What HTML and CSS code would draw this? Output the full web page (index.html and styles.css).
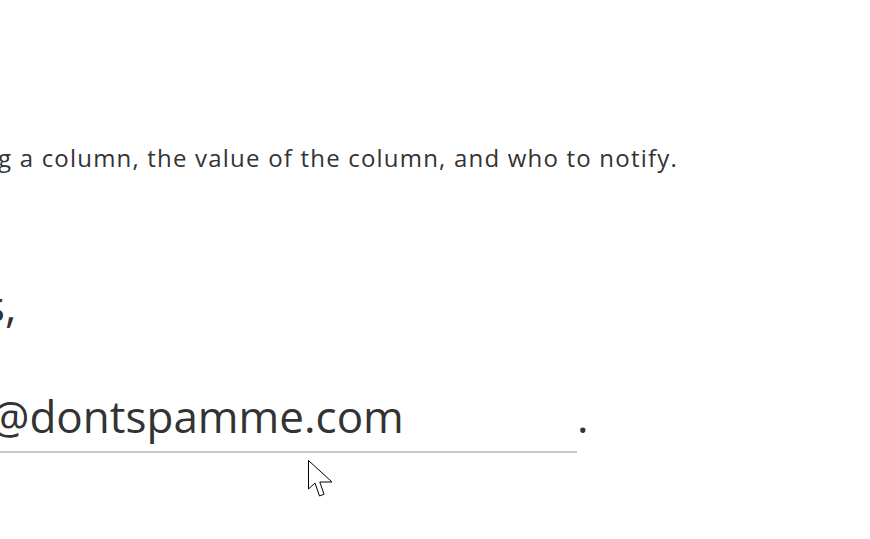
FILE: index.html
```html
<!DOCTYPE html>
<html lang="en">
<head>
<meta charset="utf-8">
<link rel="stylesheet" href="styles.css">
</head>
<body>
<div class="page">
  <p class="desc">g a column, the value of the column, and who to notify.</p>
  <div class="big line-s">s,</div>
  <div class="big line-mail">
    <span class="field">@dontspamme.com</span><span class="dot">.</span>
  </div>
</div>
<svg class="cursor" width="28" height="42" viewBox="0 0 28 42">
  <path d="M0.5 0.5 L0.5 29 L7 23 L11.5 36 L16 34.2 L11.8 22 L24 22 Z" fill="#fff" stroke="#000" stroke-width="1" stroke-linejoin="miter"/>
</svg>
</body>
</html>
```
FILE: styles.css
```css
html, body {
  margin: 0;
  padding: 0;
  background: #ffffff;
  overflow: hidden;
  width: 870px;
  height: 539px;
}
.page {
  font-family: "Open Sans", "Noto Sans", sans-serif;
  color: #333333;
  padding-top: 143px;
}
.desc {
  margin: 0 0 0 -2px;
  font-size: 24px;
  line-height: 30px;
  letter-spacing: 1.2px;
  white-space: nowrap;
}
.big {
  font-size: 44px;
  line-height: 60px;
  white-space: nowrap;
}
.line-s {
  margin-top: 102px;
  margin-left: -16px;
}
.line-mail {
  margin-top: 51px;
  margin-left: -10px;
  display: flex;
  align-items: baseline;
}
.field {
  display: inline-block;
  width: 587px;
  padding-bottom: 5px;
  border-bottom: 2px solid #c8c8c8;
  line-height: 60px;
}
.dot {
  margin-left: 0;
}
.cursor {
  position: absolute;
  left: 308px;
  top: 460px;
}
```
